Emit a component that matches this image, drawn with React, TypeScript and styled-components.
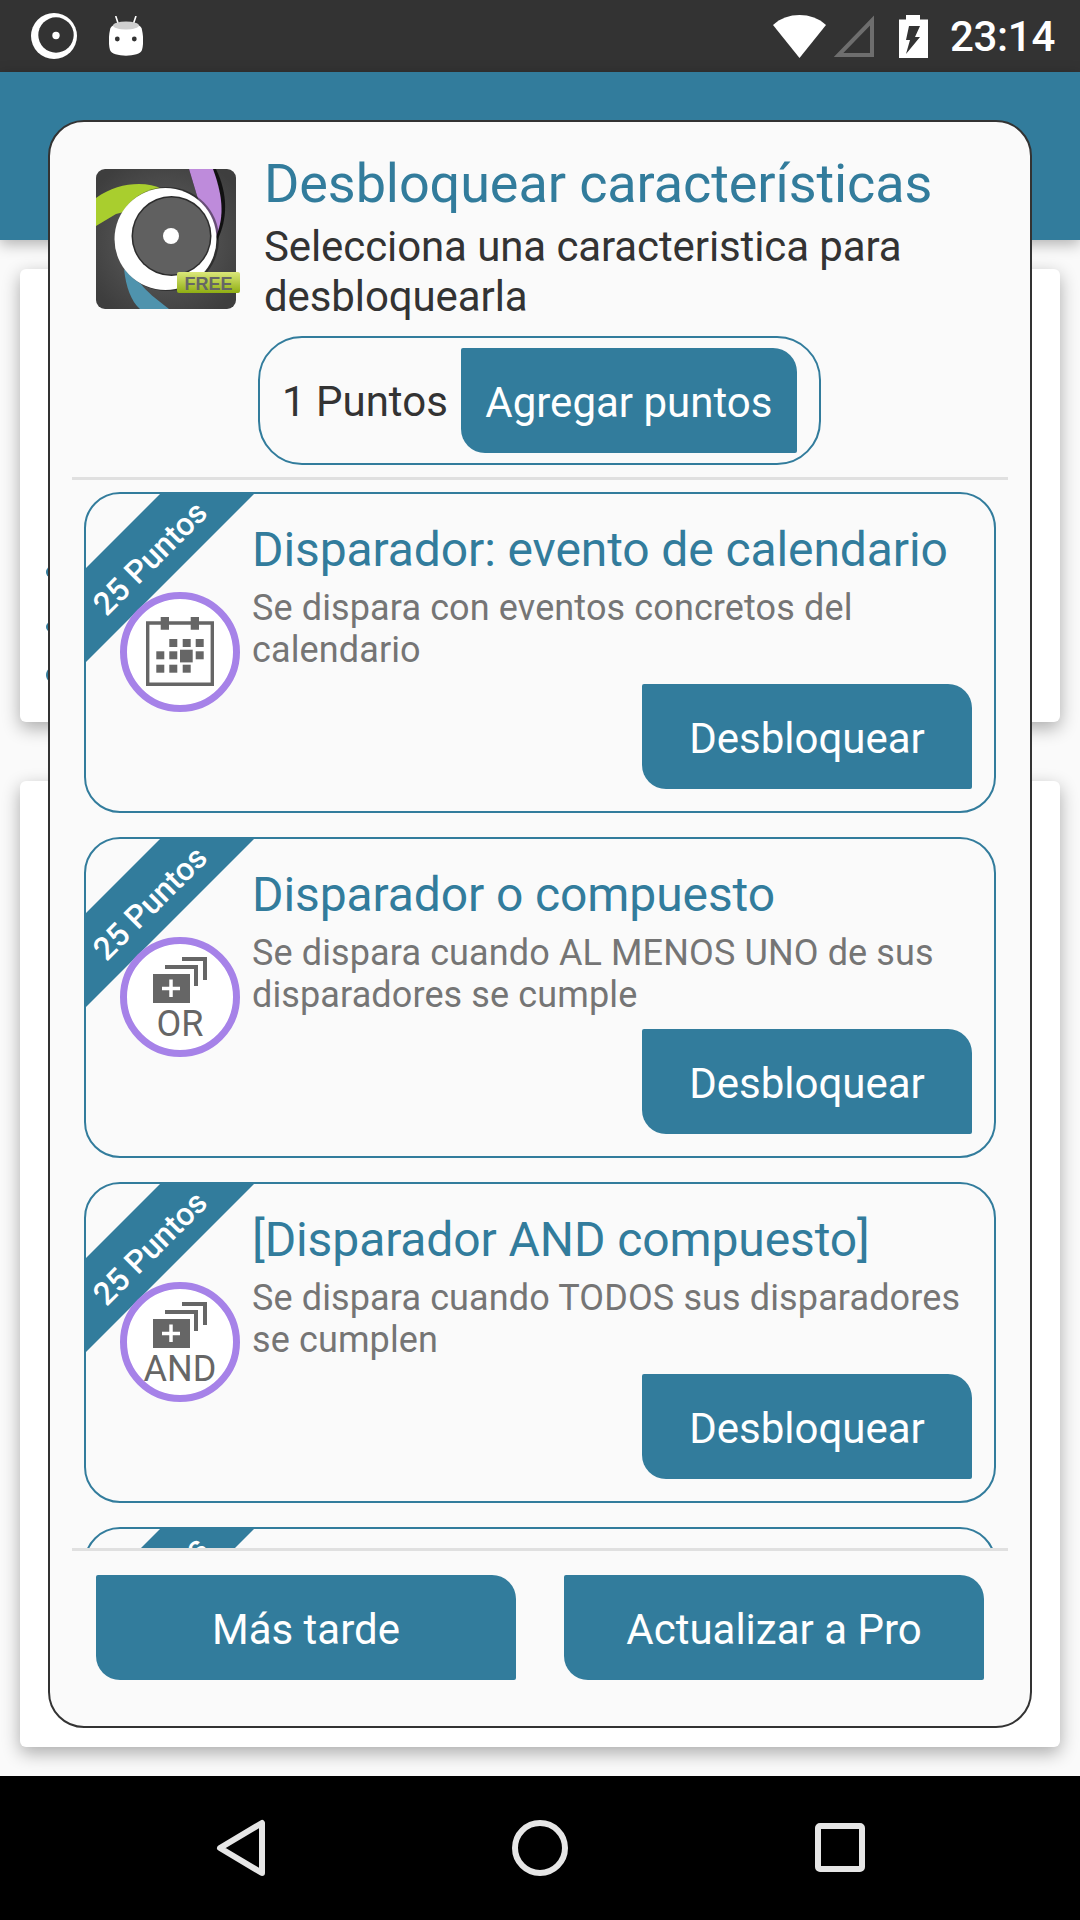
import React from 'react';
import styled, { createGlobalStyle } from 'styled-components';

const TEAL = '#327c9c';

const GlobalStyle = createGlobalStyle`
  html, body { margin: 0; padding: 0; background: #fafafa; }
  * { box-sizing: border-box; }
  body { font-family: Roboto, "Noto Sans", sans-serif; }
`;

const Screen = styled.div`
  position: relative;
  width: 1080px;
  height: 1920px;
  display: flex;
  flex-direction: column;
  overflow: hidden;
  background: #fafafa;
`;

const StatusBar = styled.div`
  height: 72px;
  background: #333333;
  display: flex;
  align-items: center;
  padding: 0 25px 0 31px;
  flex-shrink: 0;
`;

const StatusLeft = styled.div`
  display: flex;
  align-items: center;
  gap: 32px;
  flex: 1;
`;

const StatusRight = styled.div`
  display: flex;
  align-items: center;
`;

const Clock = styled.span`
  color: #fff;
  font-size: 42px;
  font-weight: 500;
  letter-spacing: -0.3px;
  margin-left: 22px;
`;

const AppBar = styled.div`
  height: 168px;
  background: ${TEAL};
  flex-shrink: 0;
  box-shadow: 0 4px 14px rgba(0, 0, 0, 0.3);
`;

const Content = styled.div`
  flex: 1;
  display: flex;
  flex-direction: column;
  gap: 59px;
  padding: 29px 20px 29px;
`;

const BackCard = styled.div<{ $h: number }>`
  height: ${(p) => p.$h}px;
  flex-shrink: 0;
  background: #fff;
  border-radius: 6px;
  box-shadow: 0 6px 18px rgba(0, 0, 0, 0.32);
  display: flex;
  flex-direction: column;
  align-items: flex-start;
  padding: 0 0 0 26px;
`;

const BackDot = styled.div<{ $top: number; $h: number }>`
  width: 30px;
  height: ${(p) => p.$h}px;
  margin-top: ${(p) => p.$top}px;
  border-radius: 50%;
  background: ${TEAL};
`;

const NavBar = styled.div`
  height: 144px;
  background: #000;
  flex-shrink: 0;
  display: flex;
  align-items: center;
  justify-content: center;
  gap: 243px;
`;

const Dialog = styled.div`
  position: absolute;
  left: 48px;
  top: 120px;
  width: 984px;
  height: 1608px;
  background: #fafafa;
  border: 2px solid #333;
  border-radius: 36px;
  display: flex;
  flex-direction: column;
  padding: 0 22px;
`;

const Header = styled.div`
  display: flex;
  padding: 47px 0 0 24px;
  gap: 24px;
`;

const HeaderText = styled.div`
  flex: 1;
`;

const DialogTitle = styled.div`
  color: ${TEAL};
  font-size: 54px;
  line-height: 62px;
  letter-spacing: -0.1px;
  margin-top: -16px;
`;

const DialogSubtitle = styled.div`
  color: #333;
  font-size: 42px;
  line-height: 50px;
  letter-spacing: -0.1px;
  margin-top: 7px;
`;

const PointsRow = styled.div`
  align-self: center;
  width: 563px;
  height: 129px;
  margin-top: 14px;
  margin-left: -1px;
  border: 2px solid ${TEAL};
  border-radius: 44px;
  display: flex;
  align-items: center;
  padding: 0 22px;
  gap: 13px;
`;

const PointsLabel = styled.span`
  color: #333;
  font-size: 42px;
  line-height: 52px;
  padding-top: 2px;
  white-space: nowrap;
`;

const ActionButton = styled.div<{ $w: number }>`
  width: ${(p) => p.$w}px;
  height: 105px;
  flex-shrink: 0;
  display: flex;
  align-items: center;
  justify-content: center;
  padding-top: 3px;
  background: ${TEAL};
  color: #fff;
  font-size: 42px;
  border-radius: 2px 24px 2px 24px;
`;

const Divider = styled.div`
  height: 3px;
  background: #e0e0e0;
  flex-shrink: 0;
`;

const TopDivider = styled(Divider)`
  margin-top: 12px;
`;

const ScrollArea = styled.div`
  height: 1068px;
  overflow: hidden;
  display: flex;
  flex-direction: column;
  gap: 24px;
  padding: 12px 12px 0;
  flex-shrink: 0;
`;

const FeatureCard = styled.div`
  position: relative;
  height: 321px;
  flex-shrink: 0;
  border: 2px solid ${TEAL};
  border-radius: 36px;
  overflow: hidden;
  display: flex;
  padding: 0 22px 0 34px;
  gap: 12px;
`;

const Ribbon = styled.div`
  position: absolute;
  left: -2px;
  top: -2px;
  width: 172px;
  height: 172px;
  background: ${TEAL};
  clip-path: polygon(78px 0, 172px 0, 0 172px, 0 78px);
`;

const RibbonText = styled.span`
  position: absolute;
  left: 86px;
  top: 86px;
  width: 240px;
  margin-left: -120px;
  margin-top: -15px;
  line-height: 30px;
  text-align: center;
  color: #fff;
  font-size: 32px;
  font-weight: 500;
  white-space: nowrap;
  transform: translate(-21px, -21px) rotate(-45deg) translateY(1.5px);
`;

const Badge = styled.div`
  position: relative;
  width: 120px;
  height: 120px;
  margin-top: 98px;
  flex-shrink: 0;
  border-radius: 50%;
  border: 7px solid #a682e8;
  background: #fff;
  display: flex;
  flex-direction: column;
  align-items: center;
  justify-content: flex-start;
`;

const BadgeLabel = styled.span`
  color: #666;
  font-size: 36px;
  line-height: 34px;
  margin-top: 4px;
`;

const FeatureBody = styled.div`
  flex: 1;
  display: flex;
  flex-direction: column;
  padding-top: 28px;
`;

const FeatureTitle = styled.div`
  color: ${TEAL};
  font-size: 48px;
  line-height: 56px;
  letter-spacing: -0.1px;
  white-space: nowrap;
`;

const FeatureDesc = styled.div`
  color: #757575;
  font-size: 36px;
  line-height: 42px;
  letter-spacing: 0.12px;
  margin-top: 9px;
`;

const FeatureAction = styled.div`
  position: absolute;
  right: 22px;
  top: 190px;
`;

const Footer = styled.div`
  display: flex;
  justify-content: space-between;
  padding: 24px 24px 0;
`;

const NavIcon = styled.svg`
  width: 56px;
  height: 60px;
  display: block;
`;

const TargetIcon = () => (
  <svg width="46" height="46" viewBox="0 0 46 46">
    <circle cx="23" cy="23" r="23" fill="#fff" />
    <circle cx="25" cy="22" r="17.7" fill="#333" />
    <circle cx="25" cy="22.500" r="3.700" fill="#fff" />
  </svg>
);

const AndroidHead = () => (
  <svg width="34" height="40" viewBox="0 0 34 40">
    <path d="M6.700 0 L9.300 8 M27 0 L24.300 8" stroke="#fff" strokeWidth="1.600" fill="none" />
    <path d="M1 14 C1 4 33 4 33 14 C34.500 20 34.500 29 33 34 C31 41.500 3 41.500 1 34 C-0.500 29 -0.500 20 1 14 Z" fill="#fff" />
    <ellipse cx="17" cy="9.500" rx="13" ry="4" fill="#cfcfcf" />
    <circle cx="8.300" cy="23" r="2.400" fill="#333" />
    <circle cx="25.300" cy="23" r="2.400" fill="#333" />
  </svg>
);

const Wifi = () => (
  <svg width="53" height="43" viewBox="0 0 53 43">
    <path d="M26.500 43 L0 10 C14 -3.300 39 -3.300 53 10 Z" fill="#fff" />
  </svg>
);

const Signal = () => (
  <svg width="41" height="42" viewBox="0 0 41 42" style={{ marginLeft: 7 }}>
    <path d="M39 5.500 V40 H5.500 Z" fill="none" stroke="#6e6e6e" strokeWidth="4" />
  </svg>
);

const Battery = () => (
  <svg width="29" height="43" viewBox="0 0 29 43" style={{ marginLeft: 25 }}>
    <path d="M7 0 H21 V4.500 H29 V43 H0 V4.500 H7 Z" fill="#fff" />
    <path d="M10 11 H21 L16 22 H21 L7 39 L11 25 H7 Z" fill="#333" />
  </svg>
);

const CalendarIcon = () => (
  <svg width="68" height="70" viewBox="0 0 68 70" style={{ marginTop: 18 }}>
    <path d="M1.700 6 H66.300 V67.300 H1.700 Z" fill="none" stroke="#666" strokeWidth="3.400" />
    <path d="M14.700 0 H23 V12.700 H14.700 Z M44.700 0 H53 V12.700 H44.700 Z" fill="#666" />
    {[
      [23.300, 22], [36.700, 22], [49.700, 22],
      [10.300, 34.300], [23.300, 34.300], [49.700, 34.300],
      [10.300, 47.700], [23.300, 47.700], [36.700, 47.700],
    ].map(([x, y]) => (
      <rect key={`${x}-${y}`} x={x} y={y} width="8" height="8" fill="#666" />
    ))}
    <rect x="34" y="32.700" width="12.700" height="12.700" fill="#666" />
  </svg>
);

const StackIcon = () => (
  <svg width="54" height="46" viewBox="0 0 54 46" style={{ marginTop: 13 }}>
    <path d="M29 2 H52 V23" fill="none" stroke="#666" strokeWidth="4" />
    <path d="M12 10 H43 V29" fill="none" stroke="#666" strokeWidth="4" />
    <rect x="0" y="17" width="37" height="29" fill="#666" />
    <path d="M18 22.500 V40 M9 31.500 H27" stroke="#fff" strokeWidth="3.500" />
  </svg>
);

const LogoIcon = () => (
  <svg width="144" height="140" viewBox="0 0 144 140" style={{ flexShrink: 0 }}>
    <defs>
      <radialGradient id="logoBg" cx="50%" cy="50%" r="62%">
        <stop offset="0%" stopColor="#636363" />
        <stop offset="100%" stopColor="#3e3e3e" />
      </radialGradient>
      <linearGradient id="freeBg" x1="0" y1="0" x2="0" y2="1">
        <stop offset="0%" stopColor="#dbe77a" />
        <stop offset="100%" stopColor="#8fae12" />
      </linearGradient>
      <clipPath id="logoClip">
        <rect width="140" height="140" rx="9" />
      </clipPath>
    </defs>
    <g clipPath="url(#logoClip)">
      <rect width="140" height="140" fill="url(#logoBg)" />
      <path d="M93 0 H120 C132 25 132 50 121 72 L105 40 Z" fill="#111" />
      <path d="M0 29 C22 13 50 12 66 20 L40 40 L20 45 L0 57 Z" fill="#a9ce2e" />
      <path d="M93 0 H117 C128 30 128 50 119 70 L105 40 Z" fill="#be8bdb" />
      <path d="M28 100 C30 118 35 132 44 140 H73 C60 130 50 122 45 115 Z" fill="#4f93ad" />
      <circle cx="71" cy="70" r="52" fill="#111" opacity="0.5" />
      <circle cx="69.500" cy="70" r="51" fill="#fff" />
      <circle cx="75.500" cy="67" r="40" fill="#2c2c2c" />
      <circle cx="75.500" cy="67" r="38.500" fill="#606060" />
      <circle cx="75" cy="67" r="8" fill="#fff" />
    </g>
    <rect x="81" y="103" width="63" height="21" rx="2" fill="url(#freeBg)" />
    <text x="112.500" y="121" textAnchor="middle" fontFamily="Liberation Sans, sans-serif" fontWeight="700" fontSize="18" fill="#666">
      FREE
    </text>
  </svg>
);

type Feature = {
  title: string;
  desc: string;
  badge: 'calendar' | 'OR' | 'AND';
};

const features: Feature[] = [
  {
    title: 'Disparador: evento de calendario',
    desc: 'Se dispara con eventos concretos del calendario',
    badge: 'calendar',
  },
  {
    title: 'Disparador o compuesto',
    desc: 'Se dispara cuando AL MENOS UNO de sus disparadores se cumple',
    badge: 'OR',
  },
  {
    title: '[Disparador AND compuesto]',
    desc: 'Se dispara cuando TODOS sus disparadores se cumplen',
    badge: 'AND',
  },
  {
    title: 'Disparador',
    desc: '',
    badge: 'calendar',
  },
];

const App: React.FC = () => {
  return (
    <Screen>
      <GlobalStyle />
      <StatusBar>
        <StatusLeft>
          <TargetIcon />
          <AndroidHead />
        </StatusLeft>
        <StatusRight>
          <Wifi />
          <Signal />
          <Battery />
          <Clock>23:14</Clock>
        </StatusRight>
      </StatusBar>
      <AppBar />
      <Content>
        <BackCard $h={453}>
          <BackDot $top={294} $h={18} />
          <BackDot $top={38} $h={16} />
          <BackDot $top={29} $h={22} />
        </BackCard>
        <BackCard $h={966} />
      </Content>
      <NavBar>
        <NavIcon viewBox="0 0 56 60">
          <path d="M49 5 V55 L7 30 Z" fill="none" stroke="#e6e6e6" strokeWidth="6" strokeLinejoin="round" />
        </NavIcon>
        <NavIcon viewBox="0 0 56 60">
          <circle cx="28" cy="30" r="25" fill="none" stroke="#e6e6e6" strokeWidth="6" />
        </NavIcon>
        <NavIcon viewBox="0 0 56 60">
          <rect x="7" y="8" width="44" height="43" rx="2" fill="none" stroke="#e6e6e6" strokeWidth="6" />
        </NavIcon>
      </NavBar>

      <Dialog>
        <Header>
          <LogoIcon />
          <HeaderText>
            <DialogTitle>Desbloquear características</DialogTitle>
            <DialogSubtitle>Selecciona una caracteristica para desbloquearla</DialogSubtitle>
          </HeaderText>
        </Header>
        <PointsRow>
          <PointsLabel>1 Puntos</PointsLabel>
          <ActionButton $w={336}>Agregar puntos</ActionButton>
        </PointsRow>
        <TopDivider />
        <ScrollArea>
          {features.map((f) => (
            <FeatureCard key={f.title}>
              <Ribbon>
                <RibbonText>25 Puntos</RibbonText>
              </Ribbon>
              <Badge>
                {f.badge === 'calendar' ? (
                  <CalendarIcon />
                ) : (
                  <>
                    <StackIcon />
                    <BadgeLabel>{f.badge}</BadgeLabel>
                  </>
                )}
              </Badge>
              <FeatureBody>
                <FeatureTitle>{f.title}</FeatureTitle>
                <FeatureDesc>{f.desc}</FeatureDesc>
              </FeatureBody>
              <FeatureAction>
                <ActionButton $w={330}>Desbloquear</ActionButton>
              </FeatureAction>
            </FeatureCard>
          ))}
        </ScrollArea>
        <Divider />
        <Footer>
          <ActionButton $w={420}>Más tarde</ActionButton>
          <ActionButton $w={420}>Actualizar a Pro</ActionButton>
        </Footer>
      </Dialog>
    </Screen>
  );
};

export default App;
